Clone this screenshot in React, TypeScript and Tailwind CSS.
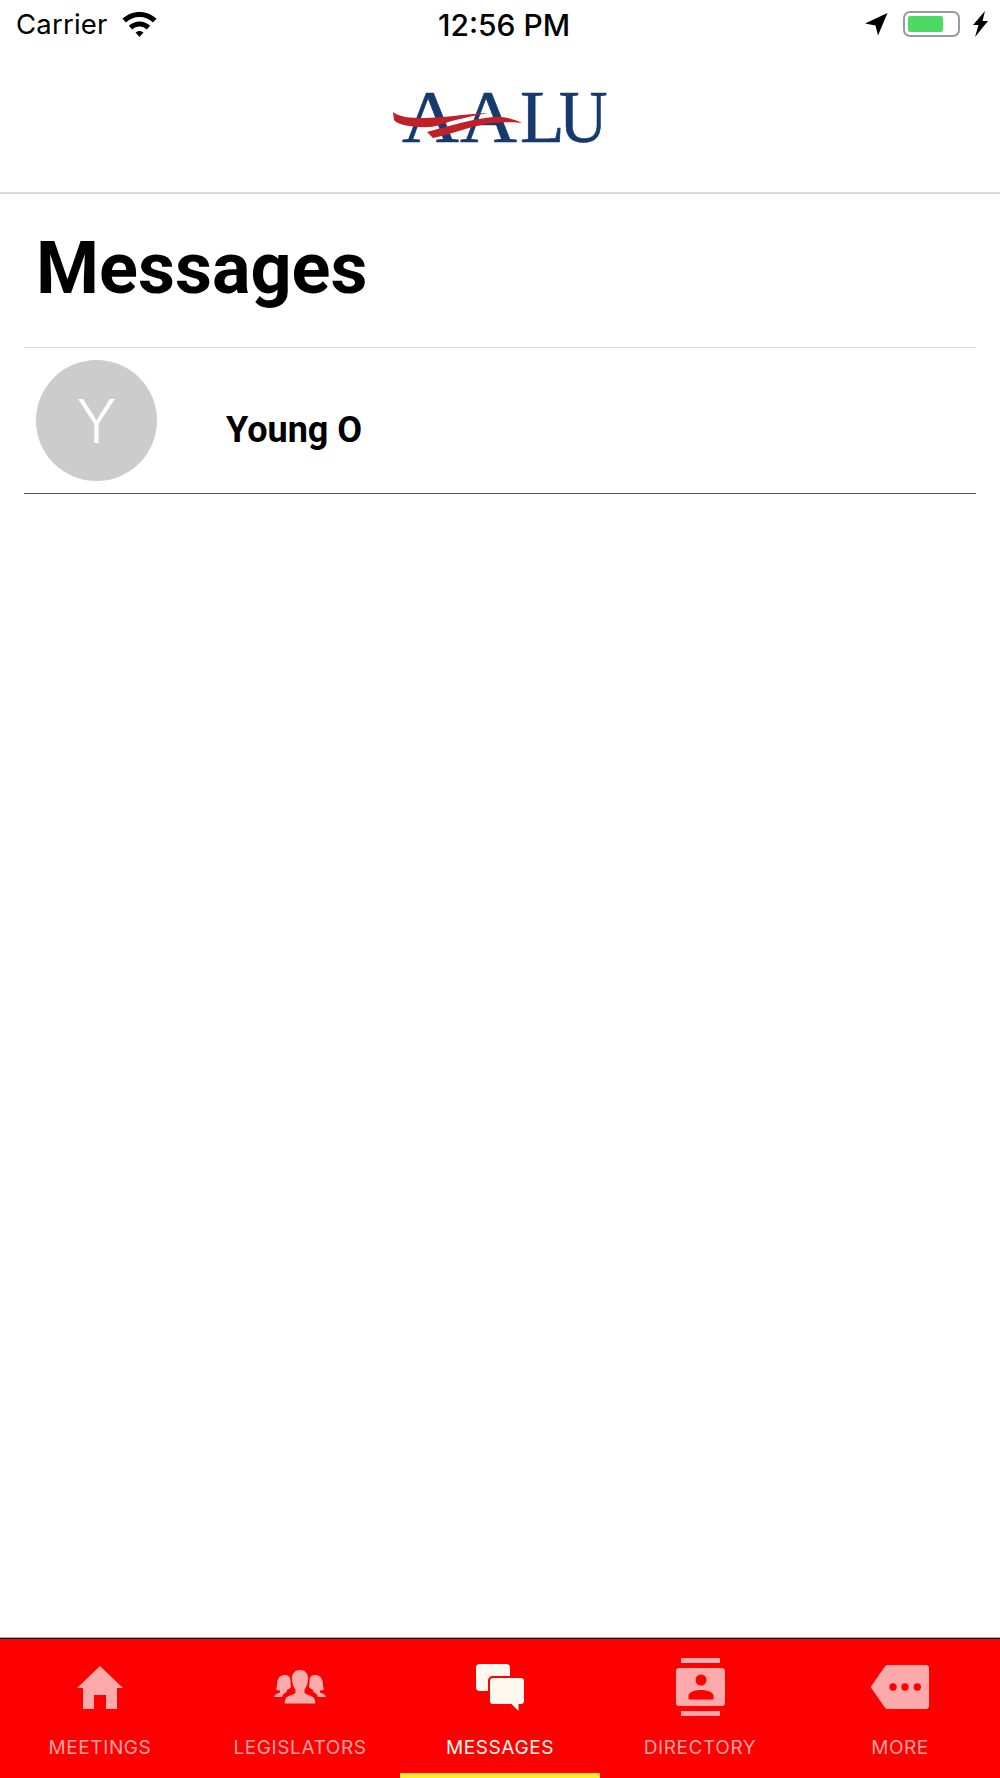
import type { ReactNode } from "react";

const tabColor = "#ffaaaa";
const activeColor = "#fff8ee";

const HomeIcon = () => (
  <svg width="46" height="43" viewBox="0 0 46 43" fill={tabColor}>
    <path d="M23 0L46 22H40V43H29V29H17V43H6V22H0Z" />
  </svg>
);

const PeopleIcon = () => (
  <svg width="52" height="34" viewBox="0 0 52 34" fill={tabColor}>
    <path d="M11 5c4 0 5.500 2.500 5.500 6 0 2 .2 4 .5 6-1.500 2-3 2.500-4 3v1.500c-2.500 1.500-4.500 3-5 5.500H0c.5-2.500 3-3.500 6-4.500v-2c-1.500 0-3-.3-4-1 1-2 1-6 1.500-8.500C4.300 7 7 5 11 5z" />
    <path d="M41 5c-4 0-5.500 2.500-5.500 6 0 2-.2 4-.5 6 1.500 2 3 2.500 4 3v1.500c2.500 1.500 4.500 3 5 5.500h8c-.5-2.500-3-3.500-6-4.500v-2c1.500 0 3-.3 4-1-1-2-1-6-1.500-8.500C47.700 7 45 5 41 5z" />
    <path
      stroke="#ff0000"
      strokeWidth="1.500"
      paintOrder="stroke"
      d="M18 8.500C18 3 21 0 26 0s8 3 8 8.500c0 4.500-1.500 9-3.500 11v3c0 1.500 7.500 3 9.500 5.500 1 1.300 1.300 3.500 1.300 5.500H10.700c0-2 .3-4.200 1.300-5.500 2-2.500 9.500-4 9.500-5.500v-3C19.500 17.500 18 13 18 8.500z"
    />
  </svg>
);

const ChatIcon = () => (
  <svg width="48" height="47" viewBox="0 0 48 47" fill={activeColor}>
    <path d="M3.500 0h27C32.500 0 34 1.500 34 3.500V12H17c-3 0-5 2-5 5v10H3.500C1.500 27 0 25.500 0 23.500V3.500C0 1.500 1.500 0 3.500 0z" />
    <path d="M17 14h28c1.700 0 3 1.300 3 3v20c0 1.700-1.300 3-3 3h-2.500v7L35.500 40H17c-1.700 0-3-1.300-3-3V17c0-1.700 1.300-3 3-3z" />
  </svg>
);

const DirectoryIcon = () => (
  <svg width="49" height="58" viewBox="0 0 49 58" fill={tabColor}>
    <path d="M5 0h39v5H5zM5 53h39v5H5z" />
    <path
      fillRule="evenodd"
      d="M3 10h43c1.700 0 3 1.300 3 3v32c0 1.700-1.300 3-3 3H3c-1.700 0-3-1.300-3-3V13c0-1.700 1.300-3 3-3zM25 16.500a5.500 5.500 0 1 0 0 11 5.500 5.500 0 0 0 0-11zM12.500 41.500h25V38c0-3.500-5.500-6-12.500-6s-12.500 2.500-12.500 6z"
    />
  </svg>
);

const MoreIcon = () => (
  <svg width="58" height="44" viewBox="0 0 58 44" fill={tabColor}>
    <path
      fillRule="evenodd"
      d="M17 0h38c1.700 0 3 1.300 3 3v38c0 1.700-1.300 3-3 3H17c-1.500 0-2.500-.6-3.300-1.800L.6 23.500c-.8-1-.8-2 0-3L13.700 1.800C14.500.6 15.500 0 17 0zM22 18.300a3.700 3.700 0 1 0 0 7.400 3.700 3.700 0 0 0 0-7.400zM34 18.300a3.700 3.700 0 1 0 0 7.400 3.700 3.700 0 0 0 0-7.400zM46.300 18.300a3.700 3.700 0 1 0 0 7.400 3.700 3.700 0 0 0 0-7.400z"
    />
  </svg>
);

interface TabProps {
  icon: ReactNode;
  label: string;
  active?: boolean;
}

const Tab = ({ icon, label, active }: TabProps) => (
  <div className="relative flex flex-col items-center">
    <div className="h-[60px] mt-[19px] flex items-center justify-center">
      {icon}
    </div>
    <span
      className={`mt-[19px] text-[19px] leading-[23px] tracking-[0.6px] font-['Inter',sans-serif] ${
        active ? "text-[#fff8ee]" : "text-[#ffa3a3]"
      }`}
    >
      {label}
    </span>
    {active && (
      <div className="absolute left-0 right-0 bottom-0 h-[5px] bg-[#ffe92e]" />
    )}
  </div>
);

const StatusBar = () => (
  <div className="h-[48px] pl-[16px] pr-[12px] grid grid-cols-3 items-center font-['Inter',sans-serif] text-black">
    <div className="flex items-center gap-[14px]">
      <span className="text-[27.5px] leading-[30px] tracking-[0.2px]">Carrier</span>
      <svg width="35" height="25" viewBox="0 0 35 25" fill="black">
        <path d="M17.500 0C24 0 30 2.500 34.500 6.800L31 10.500C27.500 7 22.700 5 17.500 5S7.500 7 4 10.500L.5 6.800C5 2.500 11 0 17.500 0z" />
        <path d="M17.500 9.500c4 0 7.800 1.600 10.700 4.300l-3.500 3.700c-1.900-1.800-4.400-2.900-7.200-2.900s-5.300 1.100-7.200 2.900l-3.500-3.700C9.700 11.100 13.500 9.500 17.500 9.500z" />
        <path d="M17.500 19c1.500 0 2.900.6 4 1.500L17.500 25l-4-4.500c1.100-.9 2.500-1.500 4-1.500z" />
      </svg>
    </div>
    <span className="ml-[4px] mt-[2px] text-center text-[30px] leading-[32px] font-medium whitespace-nowrap">
      12:56 PM
    </span>
    <div className="flex items-center justify-end">
      <svg width="23" height="23" viewBox="0 0 23 23" fill="black" className="mr-[15px]">
        <path d="M22.500 0L13 22.500 10.500 12.500 0 10.500z" />
      </svg>
      <div className="relative w-[57px] h-[26px] rounded-[7px] border-[2px] border-[#9a9a9a] p-[3px] mr-[13px]">
        <div className="w-[35px] h-[16px] rounded-[2px] bg-[#4cd964]" />
      </div>
      <svg width="15" height="26" viewBox="0 0 15 26" fill="black">
        <path d="M12 0L9.500 10H15L2 26l3.500-12H0z" />
      </svg>
    </div>
  </div>
);

const Logo = () => (
  <div className="relative w-[214px] h-[50px]">
    <div className="flex items-end h-[50px] text-[#163a6e] font-['Liberation_Serif',serif] text-[73px] leading-[50px] [-webkit-text-stroke:0.6px_#163a6e]">
      <span className="shrink-0 ml-[9px] mr-[5px] w-[53px] scale-x-[1.08] origin-left">A</span>
      <span className="shrink-0 mr-[7px] w-[53px] scale-x-[1.08] origin-left">A</span>
      <span className="shrink-0 w-[39px]">L</span>
      <span className="shrink-0 w-[48px] scale-x-[0.92] origin-left">U</span>
    </div>
    <svg
      width="132"
      height="50"
      viewBox="0 0 132 50"
      className="absolute left-0 top-0"
      fill="#c02126"
    >
      <path d="M0 19C6 24 17 25 30 25 50 25 70 21 95 20 75 24 60 27 47 32 38 35 30 34 24 34 14 33 4 31 1 27z" />
      <path d="M34 39C55 33 80 26 100 24 108 23 118 25 129 30 122 29 115 29 100 30 80 32 60 41 40 45z" />
    </svg>
  </div>
);

export default function App() {
  return (
    <div className="h-[1778px] w-full flex flex-col bg-white">
      <StatusBar />
      <header className="h-[146px] flex items-start justify-center pt-[45px] border-b-2 border-[#d9d9d9]">
        <Logo />
      </header>
      <main className="flex-1 px-[24px]">
        <h1 className="h-[153px] pt-[33px] pl-[12px] text-[72px] leading-[84px] font-bold font-['Roboto',sans-serif] text-black">
          Messages
        </h1>
        <div className="flex items-center h-[147px] pl-[12px] border-t border-[#d6d6d6] border-b border-b-[#555555]">
          <div className="w-[121px] h-[121px] rounded-full bg-[#cccccc] flex items-center justify-center text-white text-[60px] font-light font-['Inter',sans-serif]">
            Y
          </div>
          <span className="ml-[69px] mt-[18px] text-[36px] leading-[48px] font-bold font-['Roboto',sans-serif] text-black">
            Young O
          </span>
        </div>
      </main>
      <nav className="h-[141px] grid grid-cols-5 bg-[#ff0000] border-t border-t-[#a8a8a8] shadow-[inset_0_1px_0_#000000]">
        <Tab icon={<HomeIcon />} label="MEETINGS" />
        <Tab icon={<PeopleIcon />} label="LEGISLATORS" />
        <Tab icon={<ChatIcon />} label="MESSAGES" active />
        <Tab icon={<DirectoryIcon />} label="DIRECTORY" />
        <Tab icon={<MoreIcon />} label="MORE" />
      </nav>
    </div>
  );
}
